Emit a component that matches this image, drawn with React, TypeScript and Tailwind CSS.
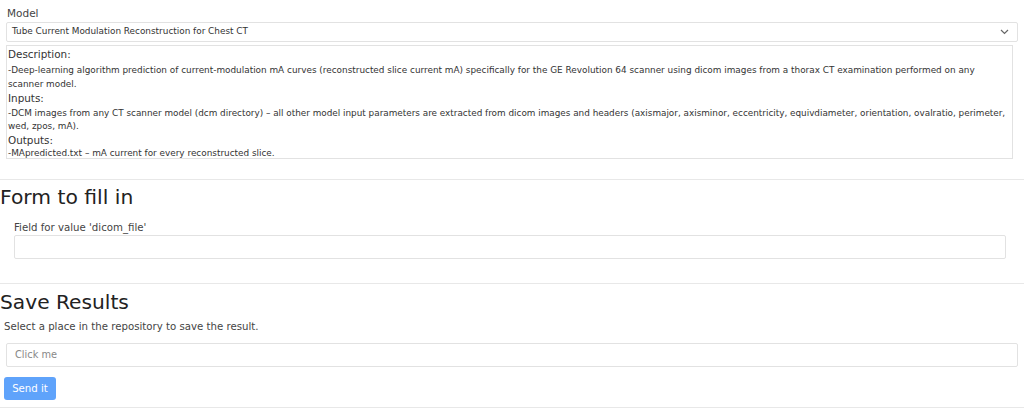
import React from 'react';

const font = { fontFamily: '"DejaVu Sans", Verdana, sans-serif' };

export default function App() {
  return (
    <div className="w-[1024px] h-[419px] bg-white text-[#333] font-['DejaVu_Sans',sans-serif] overflow-hidden">
      <div className="px-[6px] pt-[5px]">
        <div className="pl-px text-[10.5px] leading-[16px] text-[#444]">Model</div>
        <div className="mt-px h-[20px] border border-[#e2e2e2] rounded-[2px] flex items-center justify-between pl-[5px] pr-[8px]">
          <span className="text-[8.9px] text-[#333]">Tube Current Modulation Reconstruction for Chest CT</span>
          <svg width="9" height="6" viewBox="0 0 9 6" fill="none" stroke="#666" strokeWidth="1.2">
            <path d="M1 1l3.5 3.5L8 1" />
          </svg>
        </div>
        <div className="mt-[3px] mr-[5px] h-[114px] border border-[#e2e2e2] pl-px pt-px text-[#333] overflow-hidden">
          <div className="text-[10.4px] leading-[14px] mb-[2px]">Description:</div>
          <div className="text-[8.9px] leading-[14px]">
            -Deep-learning algorithm prediction of current-modulation mA curves (reconstructed slice current mA) specifically for the GE Revolution 64 scanner using dicom images from a thorax CT examination performed on any
            <br />
            scanner model.
          </div>
          <div className="text-[10.4px] leading-[14px] mb-[2px]">Inputs:</div>
          <div className="text-[8.85px] leading-[13px]">
            -DCM images from any CT scanner model (dcm directory) – all other model input parameters are extracted from dicom images and headers (axismajor, axisminor, eccentricity, equivdiameter, orientation, ovalratio, perimeter, wed, zpos, mA).
          </div>
          <div className="text-[10.4px] leading-[13px] mt-px">Outputs:</div>
          <div className="text-[8.9px] leading-[13px]">-MApredicted.txt – mA current for every reconstructed slice.</div>
        </div>
      </div>

      <div className="mt-[20px] border-t border-[#e8e8e8]" />
      <div className="pt-[5px]">
        <h2 className="text-[20.3px] leading-[24px] text-[#222]">Form to fill in</h2>
        <div className="px-[14px] pt-[12px] pr-[18px]">
          <div className="text-[10.2px] leading-[13px] text-[#444]">Field for value 'dicom_file'</div>
          <div className="mt-[1px] h-[24px] border border-[#e2e2e2] rounded-[2px]" />
        </div>
      </div>

      <div className="mt-[24px] border-t border-[#e8e8e8]" />
      <div className="pt-[6px]">
        <h2 className="text-[20.2px] leading-[24px] text-[#222]">Save Results</h2>
        <div className="pl-[4px] pt-[6px] text-[10.2px] leading-[14px] text-[#444]">Select a place in the repository to save the result.</div>
        <div className="mx-[6px] mt-[9px] h-[24px] border border-[#e2e2e2] rounded-[2px] flex items-center pl-[8px] text-[9.8px] text-[#888]">
          Click me
        </div>
        <div className="pl-[4px] pt-[8px]">
          <button className="h-[23px] w-[52px] rounded-[3px] bg-[#5fa3fb] text-white text-[10.2px]" style={font}>
            Send it
          </button>
        </div>
      </div>
      <div className="mt-[7px] border-t border-[#e8e8e8]" />
    </div>
  );
}
